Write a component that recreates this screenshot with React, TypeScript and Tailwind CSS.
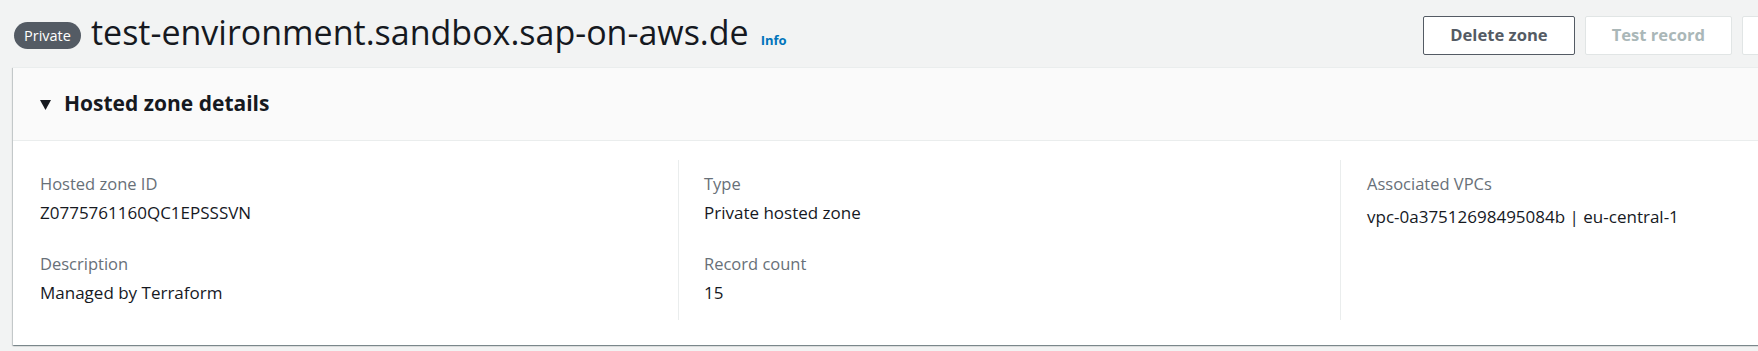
import React from 'react';

const labelCls = "text-[16.5px] leading-[22px] text-[#687078]";
const valueCls = "text-[17px] leading-[22px] text-[#16191f]";

const Field: React.FC<{ label: string; value: string; valueCls?: string }> = ({ label, value, valueCls: vc }) => (
    <div>
        <div className={labelCls}>{label}</div>
        <div className={vc || `mt-[7px] ${valueCls}`}>{value}</div>
    </div>
);

export default function App() {
    return (
        <div className="w-[1758px] h-[351px] overflow-hidden bg-[#f2f3f3] font-['Open_Sans',sans-serif]">
            <div className="w-[2016px] px-[13px]">
                {/* Page header */}
                <div className="flex items-start pt-[16px] pb-[12px]">
                    <span className="mt-[6px] ml-[1px] h-[27px] px-[10px] rounded-full bg-[#545b64] text-white text-[14.5px] leading-[27px]">
                        Private
                    </span>
                    <div className="flex items-baseline ml-[10px]">
                        <h1 className="text-[34px] leading-[33px] text-[#16191f]">test-environment.sandbox.sap-on-aws.de</h1>
                        <a className="ml-[12px] text-[13px] font-bold text-[#0073bb]">Info</a>
                    </div>
                    <div className="ml-auto flex gap-[10px]">
                        <button className="h-[39px] px-[26px] border border-[#545b64] rounded-[2px] bg-white text-[16.6px] font-bold text-[#545b64]">
                            Delete zone
                        </button>
                        <button className="h-[39px] px-[26px] border border-[#e1e5e5] rounded-[2px] bg-white text-[16.6px] font-bold text-[#aab7b8]">
                            Test record
                        </button>
                        <button className="h-[39px] w-[261px] border border-[#e1e5e5] rounded-[2px] bg-white text-[16.6px] font-bold text-[#aab7b8]">
                            Edit hosted zone details
                        </button>
                    </div>
                </div>

                {/* Hosted zone details panel */}
                <div className="bg-white border-t border-[#eaeded] shadow-[0_1px_1px_0_rgba(0,28,36,0.3),1px_1px_1px_0_rgba(0,28,36,0.15),-1px_1px_1px_0_rgba(0,28,36,0.15)]">
                    <div className="h-[73px] flex items-center pl-[27px] bg-[#fafafa] border-b border-[#eaeded]">
                        <svg width="11" height="10" viewBox="0 0 11 10" className="mt-[1px]">
                            <polygon points="0,0 11,0 5.5,10" fill="#16191f" />
                        </svg>
                        <h2 className="ml-[13px] text-[21px] font-bold text-[#16191f]">Hosted zone details</h2>
                    </div>
                    <div className="grid grid-cols-[665px_662px_662px] pt-[19px] pb-[25px]">
                        <div className="pl-[27px] pt-[13px] pb-[16px] flex flex-col gap-[29px]">
                            <Field label="Hosted zone ID" value="Z0775761160QC1EPSSSVN" />
                            <Field label="Description" value="Managed by Terraform" />
                        </div>
                        <div className="pl-[25px] pt-[13px] pb-[16px] border-l border-[#eaeded] flex flex-col gap-[29px]">
                            <Field label="Type" value="Private hosted zone" />
                            <Field label="Record count" value="15" />
                        </div>
                        <div className="pl-[26px] pt-[13px] pb-[16px] border-l border-[#eaeded]">
                            <Field
                                label="Associated VPCs"
                                value="vpc-0a37512698495084b | eu-central-1"
                                valueCls={`mt-[11px] ${valueCls}`}
                            />
                        </div>
                    </div>
                </div>
            </div>
        </div>
    );
}
